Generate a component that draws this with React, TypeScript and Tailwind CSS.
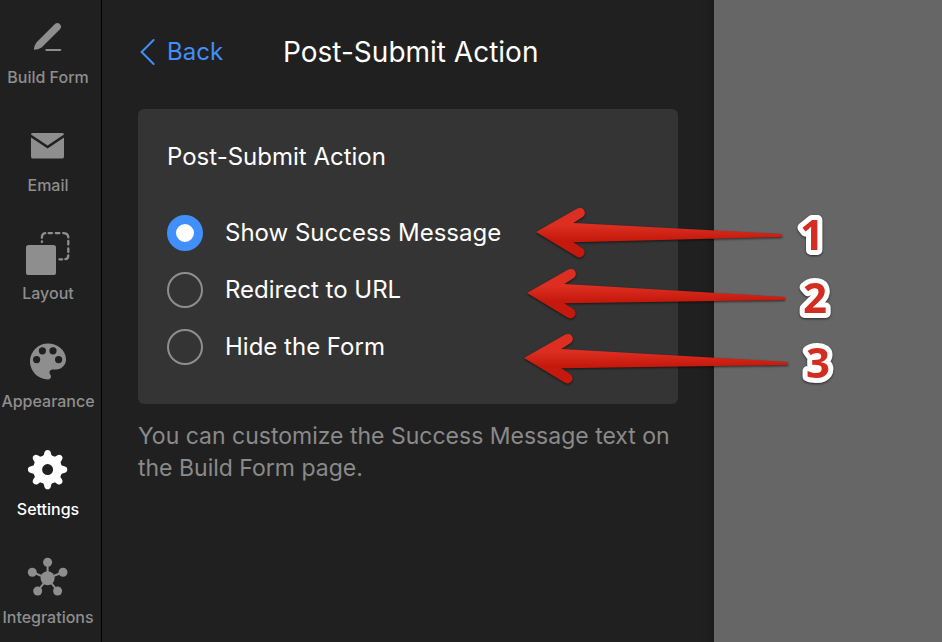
import { useState } from "react"

function BuildFormIcon() {
  return (
    <svg viewBox="0 0 48 48" className="size-12" fill="currentColor" aria-hidden="true">
      <path d="M31.2 9.8 12.4 28.4Q10 31.6 9.8 35.8Q14.2 35.8 17.6 33.6L36.2 15A3.65 3.65 0 0 0 31.2 9.8Z" />
      <path d="M22.4 36H36.2" stroke="currentColor" strokeWidth="2.2" strokeLinecap="round" />
    </svg>
  )
}

function EmailIcon() {
  return (
    <svg viewBox="0 0 48 48" className="size-12" fill="currentColor" aria-hidden="true">
      <path d="M9 11H38Q40 11 40 12.4L23.6 23.4 7 12.4Q7 11 9 11Z" />
      <path d="M7 15.4 23.6 26.6 40 15.4V34.4Q40 36.6 38 36.6H9Q7 36.6 7 34.4Z" />
    </svg>
  )
}

function LayoutIcon() {
  return (
    <svg viewBox="0 0 48 48" className="size-12" aria-hidden="true">
      <rect x="2" y="15" width="30" height="30" rx="2.6" fill="currentColor" />
      <path
        d="M17.9 12V11.4M17.9 7.8Q17.8 3.6 21.2 3.2M24.6 3.1H28M31.8 3.1H35.4M39.2 3.1Q44.2 3.1 44.3 7.4M44.3 11V14.6M44.3 18.4V22M44.3 25.4Q44.2 28.8 41.4 29.2M38.2 29.3H35.4"
        fill="none"
        stroke="currentColor"
        strokeWidth="2.3"
        strokeLinecap="round"
      />
    </svg>
  )
}

function AppearanceIcon() {
  return (
    <svg viewBox="0 0 24 24" className="size-12" aria-hidden="true">
      <path
        d="M12 2.7a9 9 0 0 0 0 18c.83 0 1.5-.67 1.5-1.5 0-.39-.15-.74-.39-1.01-.23-.26-.38-.61-.38-.99 0-.83.67-1.5 1.5-1.5H16c2.76 0 5-2.24 5-5 0-4.42-4.03-8-9-8z"
        fill="currentColor"
      />
      <g className="fill-[#202020]">
        <circle cx="9.2" cy="6.4" r="1.8" />
        <circle cx="14.5" cy="6.4" r="1.8" />
        <circle cx="6.3" cy="10.8" r="1.8" />
        <circle cx="17.3" cy="10.8" r="1.8" />
      </g>
    </svg>
  )
}

function SettingsIcon() {
  const angles = [0, 45, 90, 135, 180, 225, 270, 315]

  return (
    <svg viewBox="0 0 48 48" className="size-12" fill="currentColor" aria-hidden="true">
      <circle cx="23.6" cy="23.6" r="10" fill="none" stroke="currentColor" strokeWidth="9" />
      {angles.map(angle => (
        <path
          key={angle}
          transform={`rotate(${angle} 23.6 23.6)`}
          d="M17.8 11.4Q20.2 9.8 20.3 7Q20.8 3.9 23.6 3.9T26.9 7Q27 9.8 29.4 11.4Z"
        />
      ))}
    </svg>
  )
}

function IntegrationsIcon() {
  return (
    <svg viewBox="0 0 48 48" className="size-12" fill="currentColor" aria-hidden="true">
      <path
        d="M23.6 24.3V8.3M23.6 24.3 8.3 18.3M23.6 24.3 39 18.3M23.6 24.3 13.7 37M23.6 24.3 33.6 37"
        stroke="currentColor"
        strokeWidth="2"
      />
      <circle cx="23.6" cy="24.3" r="7" />
      <circle cx="23.6" cy="8.3" r="4.5" />
      <circle cx="8.3" cy="18.3" r="4.5" />
      <circle cx="39" cy="18.3" r="4.5" />
      <circle cx="13.7" cy="37" r="4.5" />
      <circle cx="33.6" cy="37" r="4.5" />
    </svg>
  )
}

const navItems = [
  { label: "Build Form", icon: <BuildFormIcon /> },
  { label: "Email", icon: <EmailIcon /> },
  { label: "Layout", icon: <LayoutIcon /> },
  { label: "Appearance", icon: <AppearanceIcon /> },
  { label: "Settings", icon: <SettingsIcon /> },
  { label: "Integrations", icon: <IntegrationsIcon /> },
]

const actions = ["Show Success Message", "Redirect to URL", "Hide the Form"]

// x and y are the arrow tip, dx and dy the way from there to its tail
const markers = [
  { x: 16, y: 32, dx: 246, dy: 3, labelX: 292, labelY: 50 },
  { x: 7, y: 93, dx: 258, dy: 5, labelX: 295, labelY: 113 },
  { x: 4, y: 158, dx: 264, dy: 5, labelX: 298, labelY: 178 },
]

function Markers() {
  return (
    <svg
      viewBox="0 0 330 200"
      className="pointer-events-none absolute top-[200px] left-[520px] h-[200px] w-[330px] overflow-visible"
    >
      <defs>
        <linearGradient id="arrow" x1="0" y1="0" x2="0" y2="1">
          <stop offset="0.35" stopColor="#dc2f22" />
          <stop offset="0.65" stopColor="#c5190d" />
        </linearGradient>
      </defs>
      {markers.map((m, i) => (
        <g key={i} className="drop-shadow-[0_1px_1px_rgb(0_0_0/0.6)]">
          <path
            transform={`translate(${m.x} ${m.y})`}
            d={`M0 0 41.3-23.4A5 5 0 0 1 46.3-14.7L37.3-9 ${m.dx} ${m.dy - 1}V${m.dy + 2}L37.3 10.3 46 16A5 5 0 0 1 41 24.7Z`}
            fill="url(#arrow)"
          />
          <text
            x={m.labelX}
            y={m.labelY}
            textAnchor="middle"
            className="fill-[#d32c20] stroke-white stroke-[10px] font-['Open_Sans',sans-serif] text-[42px] font-bold [paint-order:stroke] [stroke-linejoin:round]"
          >
            {i + 1}
          </text>
        </g>
      ))}
    </svg>
  )
}

export default function App() {
  const [selected, setSelected] = useState(actions[0])

  return (
    <div className="relative flex h-screen overflow-hidden bg-[#666] font-['Inter',sans-serif] text-white">
      <nav className="w-[102px] shrink-0 border-r border-black bg-[#202020] pt-[14px]">
        <ul className="flex w-24 flex-col gap-[35px]">
          {navItems.map(item => (
            <li key={item.label}>
              <button
                type="button"
                className={
                  item.label === "Settings"
                    ? "flex w-full flex-col items-center gap-[5px] text-base leading-5 font-medium text-white"
                    : "flex w-full flex-col items-center gap-[5px] text-base leading-5 font-medium text-[#8e8e8e]"
                }
              >
                {item.icon}
                <span>{item.label}</span>
              </button>
            </li>
          ))}
        </ul>
      </nav>

      <main className="flex-1 bg-[#202020] px-9 pt-8 shadow-[inset_-12px_0_10px_-10px_rgb(0_0_0/0.25)]">
        <header className="flex h-10 items-center gap-[60px]">
          <a href="#" className="flex items-center gap-[11px] text-2xl text-[#418ff8]">
            <svg viewBox="0 0 18 28" className="h-7 w-[18px]" fill="none" aria-hidden="true">
              <path d="M15.6 2 3.6 14 15.6 26" stroke="currentColor" strokeWidth="2" strokeLinecap="round" />
            </svg>
            Back
          </a>
          <h1 className="text-[28px]">Post-Submit Action</h1>
        </header>

        <fieldset className="mt-[37px] rounded-md bg-[#343434] px-[29px] pt-7 pb-[29px]">
          <legend className="float-left h-10 w-full text-2xl leading-10">Post-Submit Action</legend>
          <div className="clear-both flex flex-col pt-[27px]">
            {actions.map(action => (
              <label key={action} className="flex h-[57px] items-center gap-[22px] text-2xl">
                <input
                  type="radio"
                  name="action"
                  checked={selected === action}
                  onChange={() => setSelected(action)}
                  className="size-9 appearance-none rounded-full border-2 border-[#8e8e8e] checked:border-[9px] checked:border-[#418ff8] checked:bg-white"
                />
                {action}
              </label>
            ))}
          </div>
        </fieldset>

        <p className="mt-4 text-[23px] leading-8 text-[#8a8a8a]">
          You can customize the Success Message text on the Build Form page.
        </p>
      </main>

      <aside className="w-[228px] shrink-0 bg-[#666]" />

      <Markers />
    </div>
  )
}
